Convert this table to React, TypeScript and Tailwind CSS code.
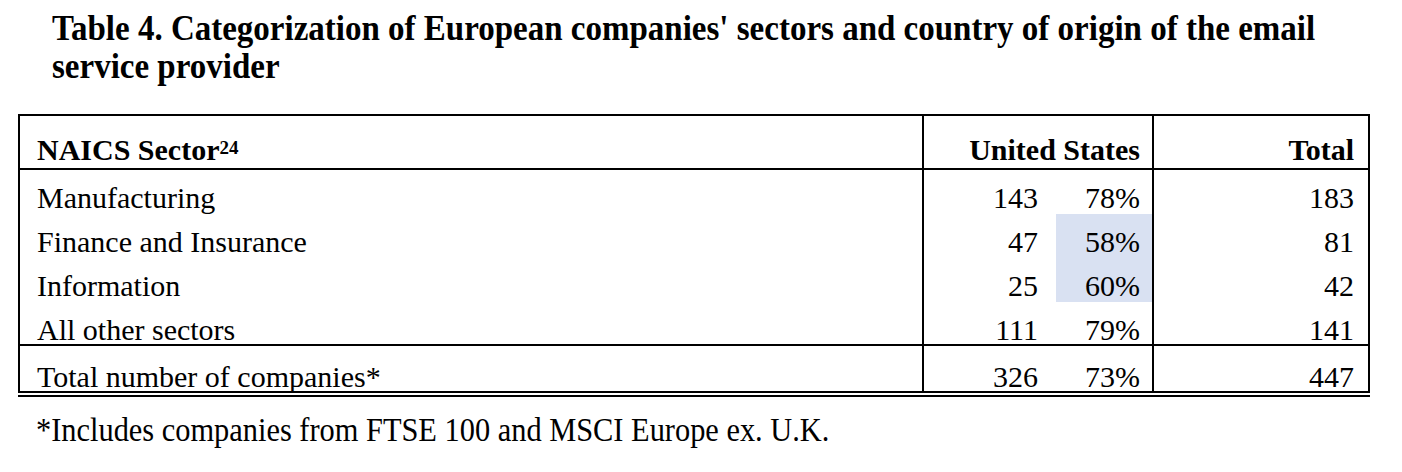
const rows = [
  { sector: "Manufacturing", us: "143", pct: "78%", total: "183", mark: false },
  { sector: "Finance and Insurance", us: "47", pct: "58%", total: "81", mark: true },
  { sector: "Information", us: "25", pct: "60%", total: "42", mark: true },
  { sector: "All other sectors", us: "111", pct: "79%", total: "141", mark: false },
];

export default function App() {
  return (
    <div className="w-[1402px] h-[472px] overflow-hidden bg-white text-black font-['Liberation_Serif','Times_New_Roman',serif] pt-[9px]">
      <h1 className="ml-[52px] text-[33px] leading-[34.5px] font-bold origin-top-left scale-y-[1.1] whitespace-nowrap">
        Table 4. Categorization of European companies' sectors and country of origin of the email
        <br />
        service provider
      </h1>

      {/* table */}
      <div className="mt-[36px] ml-[18px] w-[1352px]">
        <div className="border-2 border-black text-[30px] leading-[36px]">
          {/* header */}
          <div className="flex h-[54px] border-b-2 border-black font-bold">
            <div className="w-[902px] flex items-end pl-[17px]">
              <span>
                NAICS Sector<sup className="text-[19px] align-[6px] leading-none top-0">24</sup>
              </span>
            </div>
            <div className="w-[230px] border-l-2 border-black flex items-end justify-end pr-[12px]">
              United States
            </div>
            <div className="w-[216px] border-l-2 border-black flex items-end justify-end pr-[14px]">
              Total
            </div>
          </div>

          {rows.map((r, i) => (
            <div
              key={r.sector}
              className={`flex h-[44px] ${i === rows.length - 1 ? "border-b-2 border-black" : ""}`}
            >
              <div className="w-[902px] pl-[17px] pt-[10px]">{r.sector}</div>
              <div className="w-[230px] border-l-2 border-black flex">
                <div className="w-[132px] text-right pr-[18px] pt-[10px]">{r.us}</div>
                <div className={`w-[96px] text-right pr-[12px] pt-[10px] ${r.mark ? "bg-[#d9e1f2]" : ""}`}>
                  {r.pct}
                </div>
              </div>
              <div className="w-[216px] border-l-2 border-black text-right pr-[14px] pt-[10px]">{r.total}</div>
            </div>
          ))}

          {/* total row */}
          <div className="flex h-[45px]">
            <div className="w-[902px] pl-[17px] pt-[13px]">Total number of companies*</div>
            <div className="w-[230px] border-l-2 border-black flex">
              <div className="w-[132px] text-right pr-[18px] pt-[13px]">326</div>
              <div className="w-[96px] text-right pr-[12px] pt-[13px]">73%</div>
            </div>
            <div className="w-[216px] border-l-2 border-black text-right pr-[14px] pt-[13px]">447</div>
          </div>
        </div>
        <div className="mt-[2px] h-[2px] bg-black" />
      </div>

      <p className="mt-[13px] ml-[36px] text-[30.4px] leading-[36px] origin-top-left scale-y-[1.1] whitespace-nowrap">
        *Includes companies from FTSE 100 and MSCI Europe ex. U.K.
      </p>
    </div>
  );
}
